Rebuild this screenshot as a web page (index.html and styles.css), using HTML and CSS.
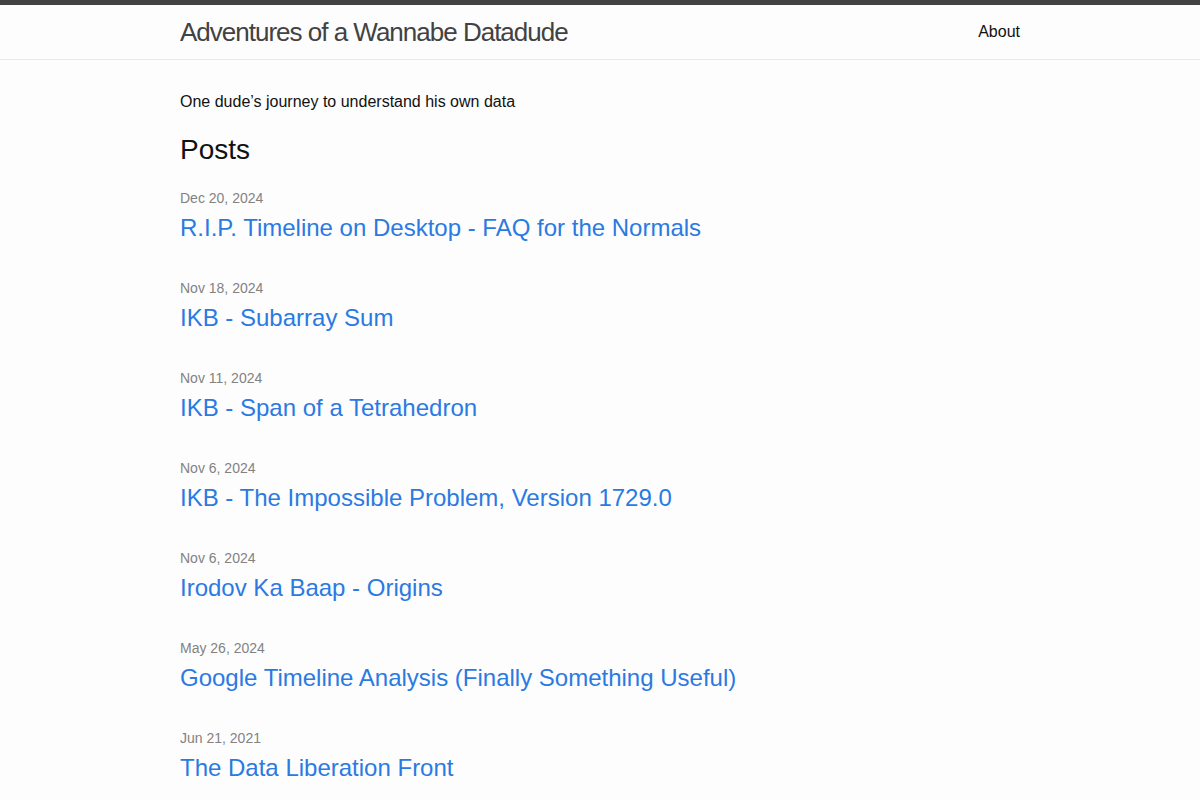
FILE: index.html
```html
<!DOCTYPE html>
<html lang="en">
<head>
  <meta charset="utf-8">
  <title>Adventures of a Wannabe Datadude</title>
  <link rel="stylesheet" href="styles.css">
</head>
<body>
<header class="site-header">
  <div class="wrapper header-row">
    <a class="site-title" href="#">Adventures of a Wannabe Datadude</a>
    <nav class="site-nav">
      <a class="page-link" href="#">About</a>
    </nav>
  </div>
</header>
<main class="page-content">
  <div class="wrapper">
    <p class="site-description">One dude’s journey to understand his own data</p>
    <h2 class="post-list-heading">Posts</h2>
    <ul class="post-list">
      <li>
        <span class="post-meta">Dec 20, 2024</span>
        <h3><a class="post-link" href="#">R.I.P. Timeline on Desktop - FAQ for the Normals</a></h3>
      </li>
      <li>
        <span class="post-meta">Nov 18, 2024</span>
        <h3><a class="post-link" href="#">IKB - Subarray Sum</a></h3>
      </li>
      <li>
        <span class="post-meta">Nov 11, 2024</span>
        <h3><a class="post-link" href="#">IKB - Span of a Tetrahedron</a></h3>
      </li>
      <li>
        <span class="post-meta">Nov 6, 2024</span>
        <h3><a class="post-link" href="#">IKB - The Impossible Problem, Version 1729.0</a></h3>
      </li>
      <li>
        <span class="post-meta">Nov 6, 2024</span>
        <h3><a class="post-link" href="#">Irodov Ka Baap - Origins</a></h3>
      </li>
      <li>
        <span class="post-meta">May 26, 2024</span>
        <h3><a class="post-link" href="#">Google Timeline Analysis (Finally Something Useful)</a></h3>
      </li>
      <li>
        <span class="post-meta">Jun 21, 2021</span>
        <h3><a class="post-link" href="#">The Data Liberation Front</a></h3>
      </li>
    </ul>
  </div>
</main>
</body>
</html>
```

FILE: styles.css
```css
body {
  margin: 0;
  font-family: "Liberation Sans", Arial, sans-serif;
  font-size: 16px;
  line-height: 1.5;
  color: #111;
  background-color: #fdfdfd;
}

a {
  text-decoration: none;
}

.wrapper {
  max-width: 840px;
  margin: 0 auto;
  padding: 0 30px;
}

/* Header */
.site-header {
  border-top: 5px solid #424242;
  border-bottom: 1px solid #e8e8e8;
}

.header-row {
  display: flex;
  justify-content: space-between;
  align-items: center;
  height: 54px;
}

.site-title {
  font-size: 26px;
  line-height: 54px;
  letter-spacing: -1px;
  color: #424242;
}

.page-link {
  color: #111;
  line-height: 1.5;
}

/* Content */
.page-content {
  padding: 30px 0;
}

.site-description {
  margin: 0 0 15px;
}

.post-list-heading {
  font-size: 28px;
  font-weight: normal;
  line-height: 42px;
  margin: 0 0 15px;
}

.post-list {
  list-style: none;
  margin: 0;
  padding: 0;
}

.post-list li {
  padding-top: 2px;
  margin-bottom: 30px;
}

.post-meta {
  display: block;
  font-size: 14px;
  color: #828282;
}

.post-list h3 {
  margin: 1px 0 0;
  font-weight: normal;
}

.post-link {
  display: block;
  font-size: 24px;
  line-height: 36px;
  color: #2a7ae2;
}
```
